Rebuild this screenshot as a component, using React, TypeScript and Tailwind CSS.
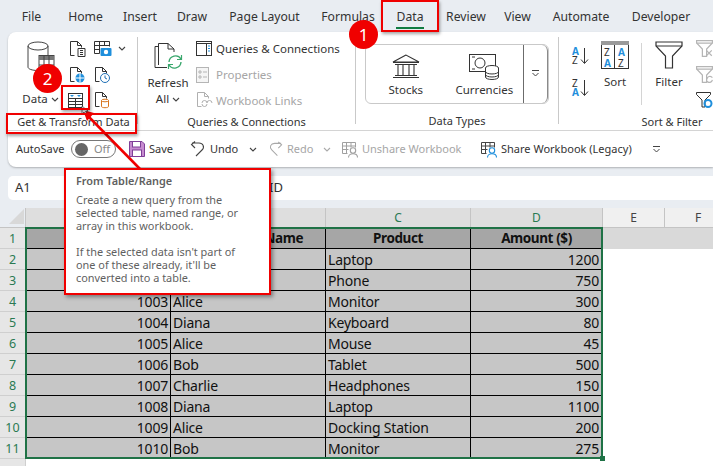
import React from "react";

const ui = "font-['Noto_Sans','Open_Sans',sans-serif]";

const tabs = [
  { t: "File", c: "w-[19px] ml-[22px]" },
  { t: "Home", c: "w-[35px] ml-[27px]" },
  { t: "Insert", c: "w-[32px] ml-[21px]" },
  { t: "Draw", c: "w-[30px] ml-[21px]" },
  { t: "Page Layout", c: "w-[71px] ml-[22px]" },
  { t: "Formulas", c: "w-[52px] ml-[22px]" },
  { t: "Data", c: "w-[28px] ml-[22px]" },
  { t: "Review", c: "w-[44px] ml-[20px]" },
  { t: "View", c: "w-[27px] ml-[16px]" },
  { t: "Automate", c: "w-[56px] ml-[22px]" },
  { t: "Developer", c: "w-[60px] ml-[22px]" },
  { t: "Help", c: "w-[28px] ml-[21px]" },
];

const Caret = ({ c = "#444" }: { c?: string }) => (
  <svg width="8" height="5" viewBox="0 0 8 5" className="shrink-0"><path d="M1 1l3 3 3-3" fill="none" stroke={c} strokeWidth="1.1" /></svg>
);
const DropLine = () => (
  <svg width="9" height="7" viewBox="0 0 9 7" className="shrink-0"><path d="M1 .5h7M1.500 3l3 3 3-3" fill="none" stroke="#444" strokeWidth="1" /></svg>
);
const Doc = ({ children, s = "#333" }: { children?: React.ReactNode; s?: string }) => (
  <svg width="17" height="18" viewBox="0 0 17 18" className="shrink-0">
    <path d="M1.500 15.500v-14h7l4 4v2M8.500 1.500v4h4M1.500 15.500h4" fill="none" stroke={s} strokeWidth="1" />
    {children}
  </svg>
);
const Funnel = ({ s = "#333", w = 28, h = 28, children }: { s?: string; w?: number; h?: number; children?: React.ReactNode }) => (
  <svg width={w} height={h} viewBox="0 0 28 28" className="shrink-0">
    <path d="M1 1h26v4l-9.500 10v12h-7V15L1 5z" fill="none" stroke={s} strokeWidth={w > 20 ? 1.2 : 2} />
    <path d="M1 5h26" stroke={s} strokeWidth={w > 20 ? 1 : 2} />
    {children}
  </svg>
);

function DataIcon() {
  return (
    <svg width="28" height="35" viewBox="0 0 28 35" className="shrink-0">
      <ellipse cx="11" cy="5" rx="10" ry="4" fill="none" stroke="#444" strokeWidth="1" />
      <path d="M1 5v21c0 2 4 3.500 10 3.500M21 5v9" fill="none" stroke="#444" strokeWidth="1" />
      <rect x="12" y="14.500" width="15" height="15" fill="#fff" stroke="#444" strokeWidth="1" />
      <path d="M12 15h15v4H12z" fill="#777" />
      <path d="M12 24h15M17 15v15M22 15v15" stroke="#444" strokeWidth="1" />
    </svg>
  );
}
function TableRangeIcon() {
  return (
    <svg width="15" height="15" viewBox="0 0 15 15" className="shrink-0">
      <rect x=".5" y=".5" width="14" height="14" fill="#fff" stroke="#333" />
      <path d="M.5 5.500h14M.5 8.500h14M.5 11.500h14M7.500 5.500v9" stroke="#333" />
      <path d="M2 2l2 2 2-2zM9 2l2 2 2-2z" fill="#1f8fdc" />
    </svg>
  );
}
function RefreshIcon() {
  return (
    <svg width="30" height="30" viewBox="0 0 30 30" className="shrink-0">
      <path d="M4.500 24V2.500H14L20 8v3M14 2.500V8h6" fill="none" stroke="#333" />
      <path d="M1 26.500V5.500h3.500M1 26.500h12" fill="none" stroke="#333" />
      <path d="M15 20a6.500 6.500 0 0 1 12-3M27 20a6.500 6.500 0 0 1-12 3" fill="none" stroke="#3aa76d" strokeWidth="1.400" transform="translate(0 1)" />
      <path d="M27.500 14v4.500H23M14.500 28v-4.500H19" fill="none" stroke="#3aa76d" strokeWidth="1.200" />
    </svg>
  );
}
function SmallRow({ icon, text, gray }: { icon: React.ReactNode; text: string; gray?: boolean }) {
  return (
    <div className="flex h-[26px] items-center">
      <div className="flex w-[20px] shrink-0 items-center">{icon}</div>
      <span className={`whitespace-nowrap text-[11.500px] ${gray ? "text-[#a6a6a6]" : "text-[#333]"}`}>{text}</span>
    </div>
  );
}
function Group({ className, label, labelClass, children }: { className: string; label: string; labelClass?: string; children: React.ReactNode }) {
  return (
    <div className={`flex shrink-0 flex-col ${className}`}>
      <div className="flex h-[81px] pt-[4px]">{children}</div>
      <div className={`flex h-[18px] items-center justify-center whitespace-nowrap pt-[1px] text-[11px] text-[#333] ${labelClass ?? ""}`}>{label}</div>
    </div>
  );
}
const Sep = () => <div className="mb-[6px] mt-[5px] w-px shrink-0 bg-[#c9c9c9]" />;

function QItem({ icon, text, gray, className }: { icon: React.ReactNode; text: string; gray?: boolean; className: string }) {
  return (
    <div className={`flex shrink-0 items-center gap-[4px] ${className}`}>
      {icon}
      <span className={`whitespace-nowrap text-[11px] ${gray ? "text-[#a6a6a6]" : "text-[#333]"}`}>{text}</span>
    </div>
  );
}
const ShareIcon = ({ c, s }: { c: string; s: string }) => (
  <svg width="16" height="17" viewBox="0 0 16 17" className="shrink-0">
    <path d="M.5 1.500h13v5M.5 1.500v11h5M.5 5h13M.5 8.500h6M4.500 1.500v11M9 1.500v5" fill="none" stroke={s} />
    <circle cx="11" cy="9.500" r="2.700" fill="#fff" stroke={c} strokeWidth="1.100" />
    <path d="M6.500 16.500c0-5 9-5 9 0" fill="none" stroke={c} strokeWidth="1.100" />
  </svg>
);

const rows: [string, string, string, string][] = [
  ["1001", "Alice", "Laptop", "1200"],
  ["1002", "Bob", "Phone", "750"],
  ["1003", "Alice", "Monitor", "300"],
  ["1004", "Diana", "Keyboard", "80"],
  ["1005", "Alice", "Mouse", "45"],
  ["1006", "Bob", "Tablet", "500"],
  ["1007", "Charlie", "Headphones", "150"],
  ["1008", "Diana", "Laptop", "1100"],
  ["1009", "Alice", "Docking Station", "200"],
  ["1010", "Bob", "Monitor", "275"],
];

const cell = "flex items-center overflow-hidden whitespace-nowrap border-b border-r border-black bg-[#c6c6c6] pt-[2px] text-[14px] tracking-[-0.2px] leading-none text-[#111]";
const headCell = "flex items-center justify-center overflow-hidden whitespace-nowrap border-b border-r border-black bg-[#a6a6a6] pt-[1px] text-[13.500px] tracking-[-0.4px] font-bold text-[#111]";
const colHead = "flex items-center justify-center border-b border-r border-[#c4c4c4] text-[12px]";
const rowHead = "flex items-center justify-center border-b border-r border-[#cfcfcf] bg-[#e6e6e6] pt-[2px] text-[12.500px] text-[#2a7a52]";

export default function App() {
  return (
    <div className={`relative h-[466px] w-[713px] overflow-hidden bg-[#e9edf2] ${ui}`}>
      {/* Tabs */}
      <div className="flex h-[32px] items-center overflow-hidden">
        {tabs.map((x) => (
          <div key={x.t} className={`relative flex h-full shrink-0 items-center justify-center whitespace-nowrap pt-[3px] text-[12.200px] text-[#333] ${x.c}`}>
            {x.t}
            {x.t === "Data" && <div className="absolute bottom-[3px] left-0 h-[2px] w-full bg-[#107c41]" />}
          </div>
        ))}
      </div>

      {/* Ribbon */}
      <div className="ml-[8px] h-[135px] overflow-hidden rounded-l-[8px] bg-white shadow-[0_1px_2px_rgba(0,0,0,0.25)]">
        <div className="flex h-[99px] border-b border-[#d4d4d4]">
          <Group className="w-[129px]" label="Get & Transform Data" labelClass="pl-[2px]">
            <div className="ml-[15px] flex w-[35px] flex-col items-center pt-[5px]">
              <DataIcon />
              <div className="mt-[15px] flex items-center gap-[3px] text-[11.500px] leading-[16px] text-[#333]">Data<Caret /></div>
            </div>
            <div className="ml-[11px] flex w-[25px] flex-col items-start">
              <div className="flex h-[26px] items-center">
                <Doc><path d="M9 8.500h7v8H9zM11 10.500h3M11 12.500h3M11 14.500h3" fill="#fff" stroke="#333" /></Doc>
              </div>
              <div className="flex h-[26px] items-center">
                <Doc><circle cx="11" cy="12" r="4.500" fill="#1f8fdc" /><path d="M6.500 12h9M11 7.500v9" stroke="#fff" /></Doc>
              </div>
              <div className="-ml-[1px] flex h-[26px] items-center"><TableRangeIcon /></div>
            </div>
            <div className="flex flex-col items-start">
              <div className="flex h-[26px] items-center gap-[6px]">
                <svg width="18" height="16" viewBox="0 0 18 16" className="shrink-0">
                  <path d="M.5.500h15v5M.5.500v12h5M.5 4.500h15M.5 8.500h5M5.500.500v12M10.500.500v4" fill="none" stroke="#333" />
                  <rect x="6.500" y="7" width="11" height="8" rx="1" fill="#1f8fdc" />
                  <circle cx="12" cy="11" r="2.200" fill="#fff" />
                </svg>
                <Caret />
              </div>
              <div className="flex h-[26px] items-center">
                <Doc><circle cx="11" cy="12" r="4.500" fill="#fff" stroke="#1f6fb5" /><path d="M11 9.500V12l2 1" fill="none" stroke="#1f6fb5" /></Doc>
              </div>
              <div className="flex h-[26px] items-center">
                <Doc><path d="M7.500 9.500v6c0 1.600 7 1.600 7 0v-6z" fill="#fff" stroke="#d9751e" /><ellipse cx="11" cy="9.500" rx="3.500" ry="1.300" fill="#fff" stroke="#d9751e" /></Doc>
              </div>
            </div>
          </Group>
          <Sep />
          <Group className="w-[217px]" label="Queries & Connections">
            <div className="ml-[10px] flex w-[40px] flex-col items-center pt-[5px]">
              <div className="pl-[2px]"><RefreshIcon /></div>
              <div className="mt-[4px] text-[11.500px] leading-[16px] text-[#333]">Refresh</div>
              <div className="flex items-center gap-[3px] text-[11.500px] leading-[16px] text-[#333]">All<Caret /></div>
            </div>
            <div className="ml-[8px] flex flex-col">
              <SmallRow text="Queries & Connections" icon={
                <svg width="16" height="15" viewBox="0 0 16 15"><rect x=".5" y=".5" width="15" height="14" fill="#fff" stroke="#333" /><path d="M.5 2.500h15M10.500 2.500v12" stroke="#333" /><path d="M12 5h2M12 7.500h2M12 10h2" stroke="#1f8fdc" /></svg>
              } />
              <SmallRow gray text="Properties" icon={
                <svg width="14" height="16" viewBox="0 0 14 16"><rect x=".5" y=".5" width="12" height="15" fill="#f5f5f5" stroke="#b5b5b5" /><path d="M3 4h2v2H3zM3 9h2v2H3zM7 5h4M7 10h4" fill="none" stroke="#b5b5b5" /></svg>
              } />
              <SmallRow gray text="Workbook Links" icon={
                <Doc s="#b0b0b0"><path d="M6 12a2.500 2.500 0 0 1 5 0M11 12a2.500 2.500 0 0 1 5 0M6 13a2.500 2.500 0 0 0 5 0" fill="none" stroke="#b0b0b0" /></Doc>
              } />
            </div>
          </Group>
          <Sep />
          <Group className="w-[202px]" label="Data Types">
            <div className="ml-[9px] mt-[8px] flex h-[60px] w-[184px] rounded-[6px] border border-[#c9c9c9]">
              <div className="flex w-[80px] flex-col items-center pt-[9px]">
                <svg width="28" height="25" viewBox="0 0 28 25" className="shrink-0">
                  <path d="M14 1L1 8h26zM1 8.500h26M3 10.500h22M1 23.500h26M3 21.500h22M6 10.500v11M11 10.500v11M17 10.500v11M22 10.500v11" fill="none" stroke="#333" strokeWidth="1.100" />
                </svg>
                <div className="mt-[3px] text-[11.500px] leading-[16px] text-[#333]">Stocks</div>
              </div>
              <div className="flex w-[78px] flex-col items-center pt-[9px]">
                <svg width="30" height="26" viewBox="0 0 30 26" className="shrink-0">
                  <rect x=".5" y=".5" width="26" height="17" fill="#fff" stroke="#333" />
                  <circle cx="11" cy="9" r="5" fill="none" stroke="#333" />
                  <path d="M3 3h3M3 15h3" stroke="#333" />
                  <ellipse cx="23" cy="14" rx="6.500" ry="2.500" fill="#fff" stroke="#333" />
                  <path d="M16.500 14v9c0 3.300 13 3.300 13 0v-9M16.500 17.500c0 3.300 13 3.300 13 0M16.500 20.500c0 3.300 13 3.300 13 0" fill="#fff" stroke="#333" />
                </svg>
                <div className="mt-[2px] text-[11.500px] leading-[16px] text-[#333]">Currencies</div>
              </div>
              <div className="flex w-[25px] items-center justify-center rounded-r-[6px] border-x border-y-0 border-x-[#6b6b6b] border-r-[#8a8a8a] pb-[1px]"><DropLine /></div>
            </div>
          </Group>
          <Sep />
          <Group className="flex-1" label="Sort & Filter" labelClass="w-[62px] ml-[82px]">
            <div className="ml-[12px] flex w-[18px] flex-col pt-[11px]">
              <svg width="18" height="18" viewBox="0 0 18 18" className="shrink-0 overflow-visible">
                <text x="1" y="8" fontSize="10" fontWeight="700" fill="#1f8fdc" fontFamily="Noto Sans">A</text>
                <text x="1" y="17" fontSize="10" fill="#333" fontFamily="Noto Sans">Z</text>
                <path d="M13.500 1v15M10 12.500l3.500 4 3.500-4" fill="none" stroke="#333" />
              </svg>
              <svg width="18" height="18" viewBox="0 0 18 18" className="mt-[14px] shrink-0 overflow-visible">
                <text x="1" y="8" fontSize="10" fill="#333" fontFamily="Noto Sans">Z</text>
                <text x="1" y="17" fontSize="10" fontWeight="700" fill="#1f8fdc" fontFamily="Noto Sans">A</text>
                <path d="M13.500 1v15M10 12.500l3.500 4 3.500-4" fill="none" stroke="#333" />
              </svg>
            </div>
            <div className="ml-[11px] flex w-[30px] flex-col items-center pt-[5px]">
              <svg width="28" height="28" viewBox="0 0 28 28" className="shrink-0">
                <rect x=".5" y=".5" width="27" height="27" fill="#fff" stroke="#333" />
                <path d="M0 0h28v4H0z" fill="#9a9a9a" />
                <path d="M13.500 4v24" stroke="#333" />
                <text x="3" y="15" fontSize="10" fill="#333" fontFamily="Noto Sans">Z</text>
                <text x="3" y="26" fontSize="10" fontWeight="700" fill="#1f8fdc" fontFamily="Noto Sans">A</text>
                <text x="17" y="15" fontSize="10" fontWeight="700" fill="#1f8fdc" fontFamily="Noto Sans">A</text>
                <text x="17" y="26" fontSize="10" fill="#333" fontFamily="Noto Sans">Z</text>
              </svg>
              <div className="mt-[5px] text-[11.500px] leading-[16px] text-[#333]">Sort</div>
            </div>
            <div className="ml-[11px] mt-[7px] h-[62px] w-px bg-[#d4d4d4]" />
            <div className="ml-[13px] flex w-[28px] flex-col items-center pt-[5px]">
              <Funnel />
              <div className="mt-[5px] text-[11.500px] leading-[16px] text-[#333]">Filter</div>
            </div>
            <div className="ml-[13px] flex flex-col">
              <div className="flex h-[26px] items-center">
                <Funnel s="#b5b5b5" w={17} h={17}><path d="M17 17l9 9M26 17l-9 9" stroke="#b5b5b5" strokeWidth="2" /></Funnel>
              </div>
              <div className="flex h-[26px] items-center">
                <Funnel s="#b5b5b5" w={17} h={17}><path d="M18 22a5 5 0 0 1 9-3M27 23a5 5 0 0 1-9 2" fill="none" stroke="#b5b5b5" strokeWidth="2" /></Funnel>
              </div>
              <div className="flex h-[26px] items-center">
                <svg width="17" height="17" viewBox="0 0 17 17" className="shrink-0">
                  <path d="M.5.500h14v2L9 8v7H6V8L.5 2.500z" fill="#fff" stroke="#333" />
                  <circle cx="12" cy="11.500" r="3.500" fill="none" stroke="#1f8fdc" strokeWidth="2" />
                </svg>
              </div>
            </div>
          </Group>
        </div>

        {/* Quick access */}
        <div className="flex h-[36px] items-center">
          <span className="ml-[8px] w-[47px] shrink-0 whitespace-nowrap text-[11px] text-[#333]">AutoSave</span>
          <div className="ml-[8px] flex h-[18px] w-[45px] shrink-0 items-center rounded-full border border-[#777] pl-[3px]">
            <div className="h-[13px] w-[13px] rounded-full bg-[#666]" />
            <span className="ml-[6px] text-[11px] text-[#888]">Off</span>
          </div>
          <QItem className="ml-[13px] w-[43px]" text="Save" icon={
            <svg width="16" height="16" viewBox="0 0 16 16" className="shrink-0"><path d="M.5.500h12.500l2.500 2.500v12.500H.5z" fill="#c78bd0" stroke="#7f3f98" /><rect x="3.500" y=".5" width="8" height="5.500" fill="#fff" stroke="#7f3f98" /><rect x="3.500" y="9" width="9" height="6.500" fill="#fff" stroke="#7f3f98" /></svg>
          } />
          <QItem className="ml-[18px] w-[50px]" text="Undo" icon={
            <svg width="16" height="16" viewBox="0 0 16 16" className="shrink-0"><path d="M6 15l6-6c3-3 1-7-3-7H2M5 .5L1.500 3.500 5 7" fill="none" stroke="#444" strokeWidth="1.100" /></svg>
          } />
          <div className="ml-[9px]"><Caret /></div>
          <QItem className="ml-[11px] w-[45px]" gray text="Redo" icon={
            <svg width="15" height="16" viewBox="0 0 16 16" className="shrink-0"><path d="M10 15L4 9C1 6 3 2 7 2h7M11 .5l3.500 3L11 7" fill="none" stroke="#a8a8a8" strokeWidth="1.100" /></svg>
          } />
          <div className="ml-[10px]"><Caret c="#aaa" /></div>
          <QItem className="ml-[11px] w-[121px]" gray text="Unshare Workbook" icon={<ShareIcon c="#a0a0a0" s="#a0a0a0" />} />
          <QItem className="ml-[18px] w-[150px]" text="Share Workbook (Legacy)" icon={<ShareIcon c="#1f8fdc" s="#444" />} />
          <div className="ml-[21px]"><DropLine /></div>
        </div>
      </div>

      {/* Formula bar */}
      <div className="ml-[8px] mt-[9px] flex h-[24px] items-center rounded-l-[5px] bg-white text-[13px] text-[#333]">
        <span className="ml-[7px] w-[245px] shrink-0">A1</span>
        <span className="w-[23px] shrink-0 text-right">ID</span>
      </div>

      {/* Grid */}
      <div className="relative mt-[8px] grid grid-cols-[26px_145px_155px_145px_132px_62px_48px] grid-rows-[20px] auto-rows-[21px]">
        <div className="flex items-end justify-end border-b border-r border-[#c4c4c4] bg-[#e9edf2] pb-[3px] pr-[1px]">
          <svg width="15" height="15" viewBox="0 0 15 15"><path d="M15 0v15H0z" fill="#d8d8d8" /></svg>
        </div>
        {["A", "B", "C", "D"].map((h) => (
          <div key={h} className={`${colHead} bg-[#dedede] text-[#2a7a52]`}>{h}</div>
        ))}
        <div className={`${colHead} bg-[#f0f0f0] text-[#444]`}>E</div>
        <div className="flex items-center border-b border-[#c4c4c4] bg-[#f0f0f0] pl-[30px] text-[12px] text-[#444]">F</div>

        <div className={rowHead}>1</div>
        <div className={headCell}>Order ID</div>
        <div className={`${headCell} pl-[6px]`}>Customer Name</div>
        <div className={headCell}>Product</div>
        <div className={headCell}>Amount ($)</div>
        <div className="bg-[#d9d9d9]" />
        <div className="bg-[#d9d9d9]" />

        {rows.map((r, i) => (
          <React.Fragment key={r[0]}>
            <div className={rowHead}>{i + 2}</div>
            <div className={`${cell} justify-end pr-[2px]`}>{r[0]}</div>
            <div className={`${cell} pl-[2px]`}>{r[1]}</div>
            <div className={`${cell} pl-[2px]`}>{r[2]}</div>
            <div className={`${cell} justify-end pr-[3px]`}>{r[3]}</div>
            <div className="bg-white" />
            <div className="bg-white" />
          </React.Fragment>
        ))}
        <div className="border-r border-[#cfcfcf] bg-[#e6e6e6]" />
        <div className="col-span-6 bg-white" />

        {/* Selection */}
        <div className="pointer-events-none absolute left-[25px] top-[19px] h-[232px] w-[578px] border-2 border-[#1f7246]">
          <div className="absolute bottom-[-4px] right-[-4px] h-[5px] w-[5px] bg-[#1f7246]" />
        </div>
      </div>

      {/* Annotations */}
      <svg className="pointer-events-none absolute left-0 top-0" width="713" height="466" viewBox="0 0 713 466">
        <path d="M141 170L88 116" stroke="#f00000" strokeWidth="2.500" />
        <path d="M83 110l11 3-7 8z" fill="#f00000" />
        <path d="M82 106v8l2-2 1.500 3 1.500-1-1.500-2.500 2.500-.5z" fill="#fff" stroke="#333" strokeWidth=".7" />
      </svg>
      <div className="absolute left-[381px] top-0 h-[32px] w-[58px] border-2 border-[#f00000] shadow-[1px_2px_3px_rgba(0,0,0,0.35)]" />
      <div className="absolute left-[61px] top-[85px] h-[25px] w-[29px] border-2 border-[#f00000] shadow-[1px_2px_3px_rgba(0,0,0,0.35)]" />
      <div className="absolute left-[6px] top-[113px] h-[21px] w-[131px] border-2 border-[#f00000] shadow-[1px_2px_3px_rgba(0,0,0,0.35)]" />
      <div className="absolute left-[349px] top-[20px] flex h-[29px] w-[29px] items-center justify-center rounded-full bg-[#f00000] text-[17px] text-white">1</div>
      <div className="absolute left-[33px] top-[64px] flex h-[29px] w-[29px] items-center justify-center rounded-full bg-[#f00000] text-[17px] text-white">2</div>

      {/* Tooltip */}
      <div className="absolute left-[64px] top-[168px] h-[127px] w-[207px] border-2 border-[#f00000] bg-white pl-[10px] pt-[4px] text-[10.900px] leading-[13px] text-[#5f5f5f] shadow-[2px_2px_4px_rgba(0,0,0,0.4)]">
        <div className="font-semibold">From Table/Range</div>
        <div className="mt-[6px]">Create a new query from the</div>
        <div>selected table, named range, or</div>
        <div>array in this workbook.</div>
        <div className="mt-[13px]">If the selected data isn't part of</div>
        <div>one of these already, it'll be</div>
        <div>converted into a table.</div>
      </div>
    </div>
  );
}
